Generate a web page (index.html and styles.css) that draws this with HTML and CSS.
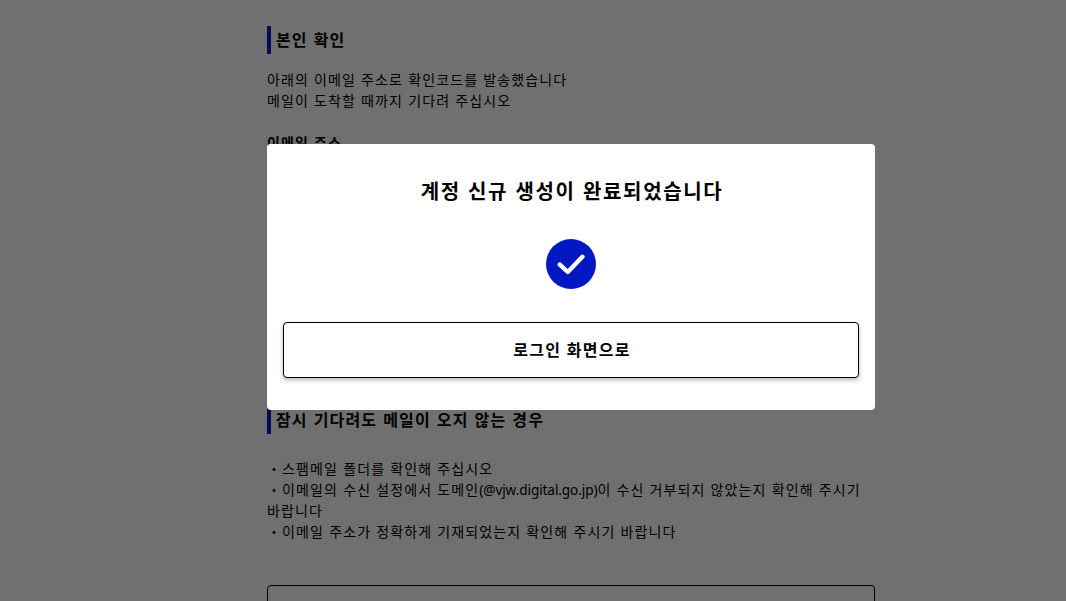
FILE: index.html
```html
<!DOCTYPE html>
<html lang="ko">
<head>
<meta charset="utf-8">
<title>본인 확인</title>
<link rel="stylesheet" href="styles.css">
</head>
<body>
<main class="page">
  <h2 class="section-title">본인 확인</h2>
  <p class="copy">아래의 이메일 주소로 확인코드를 발송했습니다<br>메일이 도착할 때까지 기다려 주십시오</p>
  <p class="field-label">이메일 주소</p>
  <div class="hidden-form"></div>
  <h2 class="section-title">잠시 기다려도 메일이 오지 않는 경우</h2>
  <p class="copy copy-notes">・스팸메일 폴더를 확인해 주십시오<br>・이메일의 수신 설정에서 도메인<span class="latin">(@vjw.digital.go.jp)</span>이 수신 거부되지 않았는지 확인해 주시기 바랍니다<br>・이메일 주소가 정확하게 기재되었는지 확인해 주시기 바랍니다</p>
  <div class="outline-box"></div>
</main>
<div class="overlay">
  <section class="modal">
    <h1 class="modal-title">계정 신규 생성이 완료되었습니다</h1>
    <svg class="check" viewBox="0 0 50 50" width="50" height="50" aria-hidden="true">
      <circle cx="25" cy="25" r="25" fill="#0017c1"/>
      <path d="M13.8 25.6L21.8 33L36.4 17.8" fill="none" stroke="#fff" stroke-width="4.4" stroke-linecap="round" stroke-linejoin="round"/>
    </svg>
    <button class="login-button" type="button">로그인 화면으로</button>
  </section>
</div>
</body>
</html>
```
FILE: styles.css
```css
* { box-sizing: border-box; }
html, body { margin: 0; height: 100%; overflow: hidden; }
body {
  background: #fff;
  color: #000;
  font-family: "Noto Sans", "Noto Sans CJK KR", sans-serif;
  font-size: 14px;
  line-height: 21px;
  letter-spacing: .08em;
  word-spacing: .3px;
  padding-left: 76px;
}
.page { width: 608px; margin: 0 auto; padding-top: 26px; }
.section-title {
  margin: 0;
  height: 28px;
  padding-left: 5px;
  border-left: 4px solid #0017c1;
  font-size: 16px;
  line-height: 28px;
  font-weight: 700;
  word-spacing: .8px;
}
.copy { margin: 15px 0 0; }
.latin { font-size: 13.6px; letter-spacing: -.1px; }
.field-label { margin: 21px 0 0; font-weight: 700; }
.hidden-form { height: 253px; }
.copy-notes { margin-top: 24px; }
.outline-box {
  height: 56px;
  margin-top: 43px;
  border: 1px solid #000;
  border-radius: 4px;
}
.overlay {
  position: fixed;
  inset: 0;
  background: rgba(0, 0, 0, .56);
  display: flex;
  justify-content: center;
  align-items: flex-start;
  padding: 144px 0 0 76px;
}
.modal {
  width: 608px;
  height: 266px;
  background: #fff;
  border-radius: 4px;
  padding: 33px 16px 32px;
  display: flex;
  flex-direction: column;
  align-items: center;
}
.modal-title {
  margin: 0;
  padding-left: 2px;
  font-size: 20px;
  line-height: 30px;
  font-weight: 700;
  letter-spacing: 1.65px;
  word-spacing: .5px;
}
.check { display: block; margin-top: 32px; }
.login-button {
  width: 100%;
  height: 56px;
  margin-top: 33px;
  padding-left: 8px;
  background: #fff;
  color: #000;
  border: 1px solid #000;
  border-radius: 4px;
  box-shadow: 0 2px 4px rgba(0, 0, 0, .3);
  font: inherit;
  font-size: 16px;
  font-weight: 700;
  letter-spacing: .08em;
}
```
